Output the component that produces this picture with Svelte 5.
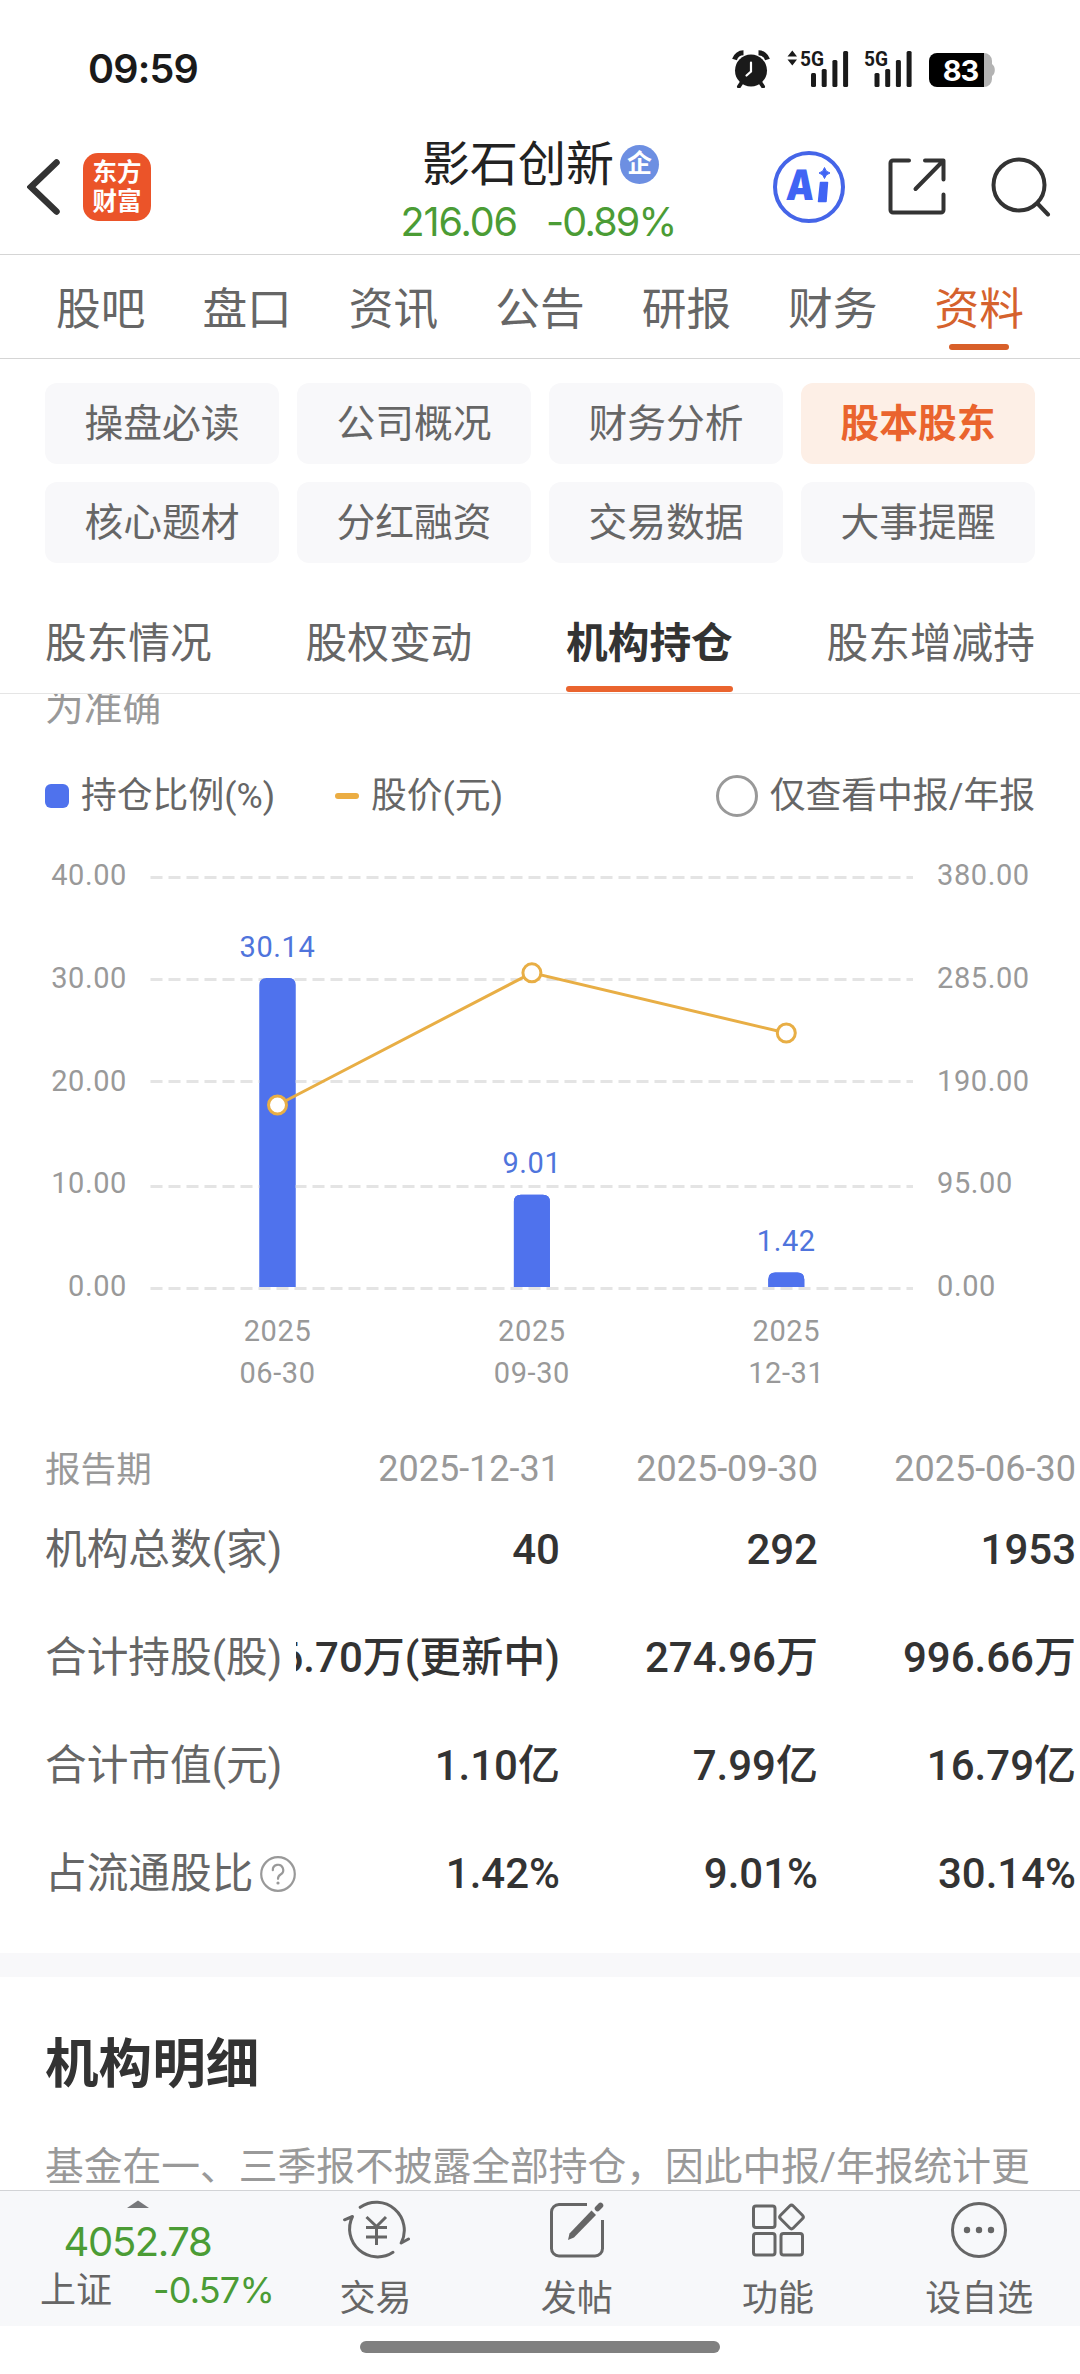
<script lang="ts">
	// 顶部一级标签
	const tabs = ['股吧', '盘口', '资讯', '公告', '研报', '财务', '资料'];
	let activeTab = '资料';

	// 资料下的栏目
	const chips = [
		'操盘必读',
		'公司概况',
		'财务分析',
		'股本股东',
		'核心题材',
		'分红融资',
		'交易数据',
		'大事提醒'
	];
	let activeChip = '股本股东';

	const subTabs = ['股东情况', '股权变动', '机构持仓', '股东增减持'];
	let activeSub = '机构持仓';

	// 仅查看中报/年报
	let onlyHalfYear = false;

	// 图表数据
	const points = [
		{ year: '2025', day: '06-30', ratio: 30.14, price: 168.7 },
		{ year: '2025', day: '09-30', ratio: 9.01, price: 291.2 },
		{ year: '2025', day: '12-31', ratio: 1.42, price: 235.4 }
	];
	const gridLines = [
		{ y: 22.5, left: '40.00', right: '380.00' },
		{ y: 124.5, left: '30.00', right: '285.00' },
		{ y: 226.5, left: '20.00', right: '190.00' },
		{ y: 331.5, left: '10.00', right: '95.00' },
		{ y: 433.5, left: '0.00', right: '0.00' }
	];
	const BASE_Y = 432;
	const PLOT_HEIGHT = 410;
	const BAR_WIDTH = 36;

	const xAt = (i: number) => 277.5 + i * 254.4;
	const ratioY = (v: number) => BASE_Y - (v / 40) * PLOT_HEIGHT;
	const priceY = (v: number) => BASE_Y - (v / 380) * PLOT_HEIGHT;
	const labelY = (i: number) => 30 + i * 102.8;

	// 只有上方两个角是圆角的柱子
	function barPath(i: number, v: number) {
		const x = xAt(i) - BAR_WIDTH / 2;
		const y = ratioY(v);
		const r = 7;
		return `M${x} ${BASE_Y}V${y + r}q0 ${-r} ${r} ${-r}h${BAR_WIDTH - 2 * r}q${r} 0 ${r} ${r}V${BASE_Y}z`;
	}

	const linePoints = points.map((p, i) => `${xAt(i)},${priceY(p.price)}`).join(' ');

	// 表格
	const periods = ['2025-12-31', '2025-09-30', '2025-06-30'];
	const rows = [
		{ label: '机构总数(家)', values: ['40', '292', '1953'] },
		{ label: '合计持股(股)', values: ['46.70万(更新中)', '274.96万', '996.66万'] },
		{ label: '合计市值(元)', values: ['1.10亿', '7.99亿', '16.79亿'] },
		{ label: '占流通股比', values: ['1.42%', '9.01%', '30.14%'], help: true }
	];
</script>

<div class="page">
	<div class="status-bar">
		<span class="time">09:59</span>
		<div class="status-icons">
			<svg class="alarm" width="38" height="38" viewBox="0 0 38 38">
				<path d="M2.500 9.500A9.500 9.500 0 0 1 11.500 2.800" fill="none" stroke="#1a1a1a" stroke-width="5" />
				<path d="M26.500 2.800a9.500 9.500 0 0 1 9 6.700" fill="none" stroke="#1a1a1a" stroke-width="5" />
				<circle cx="19" cy="20.500" r="16" fill="#1a1a1a" />
				<path d="M10 32l-3 4.500M28 32l3 4.500" stroke="#1a1a1a" stroke-width="4" stroke-linecap="round" />
				<path
					d="M19 12.500v9l-4.500 4"
					fill="none"
					stroke="#fff"
					stroke-width="2.200"
					stroke-linecap="round"
				/>
			</svg>
			<svg class="signal" width="62" height="38" viewBox="0 0 62 38">
				<path d="M0.500 6.500L5.300 0.500L10 6.500zM0.500 9.500h9.500l-4.700 6z" fill="#1a1a1a" />
				<text x="13" y="16" class="net" textLength="24" lengthAdjust="spacingAndGlyphs">5G</text>
				<rect x="24" y="23" width="5" height="14" rx="1.500" fill="#1a1a1a" />
				<rect x="34.700" y="19" width="5" height="18" rx="1.500" fill="#1a1a1a" />
				<rect x="45.400" y="10" width="5" height="27" rx="1.500" fill="#1a1a1a" />
				<rect x="56.100" y="1" width="5" height="36" rx="1.500" fill="#1a1a1a" />
			</svg>
			<svg class="signal" width="49" height="38" viewBox="0 0 49 38">
				<text x="0" y="16" class="net" textLength="24" lengthAdjust="spacingAndGlyphs">5G</text>
				<rect x="10.500" y="23" width="5" height="14" rx="1.500" fill="#1a1a1a" />
				<rect x="21.200" y="19" width="5" height="18" rx="1.500" fill="#1a1a1a" />
				<rect x="31.900" y="10" width="5" height="27" rx="1.500" fill="#1a1a1a" />
				<rect x="42.600" y="1" width="5" height="36" rx="1.500" fill="#1a1a1a" />
			</svg>
			<svg class="battery" width="66" height="34" viewBox="0 0 66 34">
				<path d="M54 0h1a8 8 0 0 1 8 8v3q2.800 2 2.800 6t-2.800 6v3a8 8 0 0 1-8 8h-1z" fill="#b3b3b3" />
				<path d="M8 0h47v34H8a8 8 0 0 1-8-8V8a8 8 0 0 1 8-8z" fill="#000" />
				<text x="31.500" y="28" class="level">83</text>
			</svg>
		</div>
	</div>

	<header class="top-bar">
		<div class="top-left">
			<svg width="34" height="60" viewBox="0 0 34 60">
				<path
					d="M29.500 5.500L4 30L29.500 54.500"
					fill="none"
					stroke="#333"
					stroke-width="6.500"
					stroke-linecap="round"
				/>
			</svg>
			<div class="app-logo"><span>东方</span><span>财富</span></div>
		</div>
		<div class="stock">
			<div class="stock-name">影石创新<span class="badge">企</span></div>
			<div class="stock-price"><span>216.06</span><span class="change">-0.89%</span></div>
		</div>
		<div class="top-right">
			<svg width="72" height="72" viewBox="0 0 72 72" aria-label="Ai">
				<circle cx="36" cy="36" r="34" fill="none" stroke="#4565e8" stroke-width="4" />
				<text
					x="12"
					y="49.500"
					class="ai"
					transform="skewX(-4) translate(4 0)"
					textLength="28"
					lengthAdjust="spacingAndGlyphs">A</text
				>
				<path
					d="M47.500 31.500h7l-1.500 19h-7.500z"
					fill="#4064f4"
					stroke="#4064f4"
					stroke-width="1.500"
					stroke-linejoin="round"
				/>
				<path
					d="M51.500 16.500q1 4.500 5.500 5.500q-4.500 1-5.500 5.500q-1-4.500-5.500-5.500q4.500-1 5.500-5.500z"
					fill="#4064f4"
					stroke="#4064f4"
				/>
			</svg>
			<svg width="58" height="58" viewBox="0 0 58 58">
				<g fill="none" stroke="#333" stroke-width="4" stroke-linecap="round" stroke-linejoin="round">
					<path
						d="M21 2.500H5a2.500 2.500 0 0 0-2.500 2.500V52a2.500 2.500 0 0 0 2.500 2.500H53a2.500 2.500 0 0 0 2.500-2.500V36.500"
					/>
					<path d="M37 2.500H55.500V21.500M54 4L27.500 31" />
				</g>
			</svg>
			<svg class="search" width="60" height="60" viewBox="0 0 60 60">
				<g fill="none" stroke="#333" stroke-width="4" stroke-linecap="round">
					<circle cx="28" cy="28" r="25.500" />
					<path d="M46.500 46.500L57 57.500" />
				</g>
			</svg>
		</div>
	</header>

	<nav class="tabs">
		{#each tabs as tab}
			<button class:active={tab === activeTab} on:click={() => (activeTab = tab)}>{tab}</button>
		{/each}
	</nav>

	<div class="chips">
		{#each chips as chip}
			<button class:active={chip === activeChip} on:click={() => (activeChip = chip)}>{chip}</button>
		{/each}
	</div>

	<nav class="sub-tabs">
		{#each subTabs as sub}
			<button class:active={sub === activeSub} on:click={() => (activeSub = sub)}>{sub}</button>
		{/each}
	</nav>

	<main class="content">
		<p class="notice">为准确</p>

		<div class="legend">
			<span class="mark bar-mark"></span>
			<span class="legend-ratio">持仓比例(%)</span>
			<span class="mark line-mark"></span>
			<span>股价(元)</span>
			<button class="filter" on:click={() => (onlyHalfYear = !onlyHalfYear)}>
				<span class="radio" class:checked={onlyHalfYear}></span>仅查看中报/年报
			</button>
		</div>

		<svg class="chart" width="1080" height="588" viewBox="0 0 1080 588">
			{#each points as p, i}
				<path d={barPath(i, p.ratio)} fill="#4f72ed" />
			{/each}
			{#each gridLines as line, i}
				<text x="127" y={labelY(i)} class="axis end">{line.left}</text>
				<text x="937" y={labelY(i)} class="axis">{line.right}</text>
				<line x1="150.500" x2="913" y1={line.y} y2={line.y} class="grid" />
			{/each}
			{#each points as p, i}
				<path d={barPath(i, p.ratio)} fill="#4f72ed" />
				<text x={xAt(i)} y={ratioY(p.ratio) - 21.5} class="axis mid value">{p.ratio}</text>
				<text x={xAt(i)} y="486" class="axis mid">{p.year}</text>
				<text x={xAt(i)} y="528" class="axis mid">{p.day}</text>
			{/each}
			<polyline points={linePoints} class="price-line" />
			{#each points as p, i}
				<circle cx={xAt(i)} cy={priceY(p.price)} r="9" class="dot" />
			{/each}
		</svg>

		<div class="table">
			<div class="labels">
				<div class="cell head">报告期</div>
				{#each rows as row}
					<div class="cell">
						{row.label}
						{#if row.help}
							<svg width="36" height="36" viewBox="0 0 36 36">
								<g fill="none" stroke="#999" stroke-width="2.200" stroke-linecap="round">
									<circle cx="18" cy="18" r="16.800" />
									<path d="M12.800 14.200a5.200 5.200 0 1 1 7.800 4.300q-2.600 1.600-2.600 4.300" />
								</g>
								<circle cx="18" cy="27" r="1.600" fill="#999" />
							</svg>
						{/if}
					</div>
				{/each}
			</div>
			<div class="scroller">
				{#each periods as period}
					<div class="cell head">{period}</div>
				{/each}
				{#each rows as row}
					{#each row.values as value}
						<div class="cell num">{value}</div>
					{/each}
				{/each}
			</div>
		</div>

		<section class="detail">
			<h2>机构明细</h2>
			<p>基金在一、三季报不披露全部持仓，因此中报/年报统计更</p>
		</section>
	</main>

	<footer class="bottom-bar">
		<div class="index">
			<svg width="22" height="8" viewBox="0 0 22 8"><path d="M0 8L11 0.500L22 8z" fill="#77787b" /></svg>
			<span class="index-value">4052.78</span>
			<div class="index-row"><span class="index-name">上证</span><span>-0.57%</span></div>
		</div>
		<div class="action">
			<svg width="68" height="60" viewBox="0 0 68 60">
				<g fill="none" stroke="#666" stroke-width="3" stroke-linecap="round" stroke-linejoin="round">
					<path d="M18.200 7.300A28 28 0 0 1 59.200 43L66.500 39" />
					<path d="M51 52.300A28 28 0 0 1 10.500 16.500L2.500 19.800" />
					<path d="M24.500 17L34.500 26.500L44 17M24 27.500H45M24 37H45M34.500 26.500V45" stroke-linecap="butt" />
				</g>
			</svg>
			<span>交易</span>
		</div>
		<div class="action">
			<svg width="56" height="60" viewBox="0 0 56 60">
				<path
					d="M38 4.500H10A7.500 7.500 0 0 0 2.500 12V48.500A7.500 7.500 0 0 0 10 56H46A7.500 7.500 0 0 0 53.500 48.500V20"
					fill="none"
					stroke="#666"
					stroke-width="3"
				/>
				<path d="M42.500 10.500L47 15L25 37.500L19 40L20.500 33.500z" fill="#666" />
				<path d="M48.500 8.500L51.500 5.500" stroke="#666" stroke-width="5.500" stroke-linecap="round" />
			</svg>
			<span>发帖</span>
		</div>
		<div class="action">
			<svg width="56" height="60" viewBox="0 0 56 60">
				<g fill="none" stroke="#666" stroke-width="3">
					<rect x="3.500" y="6" width="21.500" height="21.500" rx="2.500" />
					<rect x="3.500" y="33.500" width="21.500" height="21.500" rx="2.500" />
					<rect x="31" y="33.500" width="21.500" height="21.500" rx="2.500" />
					<rect x="32.500" y="8" width="18" height="18" rx="2.500" transform="rotate(45 41.500 17)" />
				</g>
			</svg>
			<span>功能</span>
		</div>
		<div class="action">
			<svg width="58" height="60" viewBox="0 0 58 60">
				<circle cx="29" cy="30" r="26.500" fill="none" stroke="#666" stroke-width="3" />
				<g fill="#666">
					<circle cx="17" cy="30" r="3.200" />
					<circle cx="29" cy="30" r="3.200" />
					<circle cx="41" cy="30" r="3.200" />
				</g>
			</svg>
			<span>设自选</span>
		</div>
	</footer>
	<div class="home-area"><div class="home-indicator"></div></div>
</div>

<style>
	.page {
		width: 1080px;
		height: 2374px;
		display: flex;
		flex-direction: column;
		overflow: hidden;
		background: #fff;
		color: #666;
		font-family: Roboto, 'Noto Sans CJK SC', sans-serif;
		line-height: 1.2;
	}

	button {
		padding: 0;
		border: none;
		background: none;
		color: inherit;
		font: inherit;
		cursor: pointer;
	}

	p,
	h2 {
		margin: 0;
	}

	svg {
		display: block;
		flex: none;
	}

	.status-bar {
		height: 120px;
		box-sizing: border-box;
		padding: 18px 85px 0 88px;
		display: flex;
		align-items: center;
		justify-content: space-between;
	}

	.time {
		color: #1a1a1a;
		font: 600 39.5px/50px Inter, sans-serif;
		letter-spacing: -0.8px;
	}

	.status-icons {
		display: flex;
		align-items: center;
	}

	.signal {
		margin-left: 17px;
		overflow: visible;
	}

	.signal + .signal {
		margin-left: 15px;
	}

	.battery {
		margin: 2px 0 0 16px;
	}

	.net {
		font: 700 21px Roboto, sans-serif;
		fill: #1a1a1a;
	}

	.level {
		font: 700 29px Inter, sans-serif;
		letter-spacing: -1px;
		fill: #fff;
		text-anchor: middle;
	}

	.top-bar {
		height: 134px;
		padding: 0 29px 0 27px;
		display: grid;
		grid-template-columns: 1fr auto 1fr;
		align-items: center;
		border-bottom: 1px solid #d5d5d5;
	}

	.top-left {
		display: flex;
		align-items: center;
		gap: 22px;
	}

	.app-logo {
		width: 68px;
		height: 68px;
		border-radius: 15px;
		background: #eb5429;
		color: #fff;
		display: flex;
		flex-direction: column;
		align-items: center;
		justify-content: center;
		font-size: 24.5px;
		font-weight: 700;
		line-height: 29px;
	}

	.stock {
		padding: 12px 0 0 3px;
		display: flex;
		flex-direction: column;
		align-items: center;
	}

	.stock-name {
		display: flex;
		align-items: center;
		gap: 6px;
		color: #222;
		font-size: 48px;
		line-height: 58px;
	}

	.badge {
		width: 39px;
		height: 39px;
		border-radius: 50%;
		background: #6d8fe2;
		color: #fff;
		font-size: 25px;
		font-weight: 700;
		line-height: 38px;
		text-align: center;
	}

	.stock-price {
		padding-right: 5px;
		display: flex;
		gap: 29px;
		color: #4b9c35;
		font: 400 39.5px/57px Inter, sans-serif;
		letter-spacing: -1.1px;
	}

	.change {
		letter-spacing: -1.8px;
	}

	.top-right {
		display: flex;
		align-items: center;
		justify-content: flex-end;
		gap: 43px;
	}

	.search {
		margin-left: 2px;
	}

	.ai {
		font: 900 42px Inter, sans-serif;
		fill: #4064f4;
	}

	.tabs {
		height: 103px;
		padding: 0 56px;
		display: flex;
		justify-content: space-between;
		border-bottom: 1px solid #d5d5d5;
		font-size: 44.7px;
	}

	.tabs button,
	.sub-tabs button {
		position: relative;
	}

	.tabs button {
		padding-top: 8px;
	}

	.tabs .active {
		color: #d5622d;
	}

	.tabs .active::after {
		content: '';
		position: absolute;
		left: calc(50% - 30px);
		bottom: 8px;
		width: 60px;
		height: 6px;
		border-radius: 3px;
		background: #d85f29;
	}

	.chips {
		padding: 24px 45px 0;
		display: grid;
		grid-template-columns: repeat(4, 1fr);
		gap: 18px;
	}

	.chips button {
		height: 81px;
		padding-top: 2px;
		border-radius: 12px;
		background: #f8f8fa;
		font-size: 38.75px;
	}

	.chips .active {
		background: #fdefe6;
		color: #ea642e;
		font-weight: 700;
	}

	.sub-tabs {
		height: 97px;
		padding: 33px 45px 0;
		display: flex;
		justify-content: space-between;
		border-bottom: 1px solid #e5e5e5;
		font-size: 41.7px;
	}

	.sub-tabs .active {
		color: #333;
		font-weight: 700;
	}

	.sub-tabs .active::after {
		content: '';
		position: absolute;
		left: 0;
		right: 0;
		bottom: 1px;
		height: 6px;
		border-radius: 3px;
		background: #ea642e;
	}

	.content {
		flex: 1;
		min-height: 0;
		overflow: hidden;
	}

	.notice {
		height: 43px;
		padding: 0 45px;
		display: flex;
		align-items: flex-end;
		overflow: hidden;
		color: #999;
		font-size: 38.75px;
		line-height: 58px;
	}

	.legend {
		height: 118px;
		padding: 0 45px;
		display: flex;
		align-items: center;
		gap: 12px;
		font-size: 35.8px;
	}

	.mark {
		width: 24px;
		height: 24px;
		border-radius: 6px;
		background: #4f72ed;
	}

	.legend-ratio {
		width: 242px;
	}

	.line-mark {
		height: 6px;
		border-radius: 3px;
		background: #ebad43;
	}

	.filter {
		margin-left: auto;
		display: flex;
		align-items: center;
		gap: 12px;
	}

	.radio {
		width: 42px;
		height: 42px;
		box-sizing: border-box;
		border: 3px solid #999;
		border-radius: 50%;
	}

	.radio.checked {
		border: 12px solid #ea642e;
	}

	.grid {
		stroke: #e4e4e4;
		stroke-width: 3;
		stroke-dasharray: 12 6;
	}

	.axis {
		font-size: 29px;
		letter-spacing: 0.6px;
		fill: #999;
	}

	.end {
		text-anchor: end;
	}

	.mid {
		text-anchor: middle;
	}

	.value {
		fill: #4f74dc;
	}

	.price-line {
		fill: none;
		stroke: #e8ae45;
		stroke-width: 3;
	}

	.dot {
		fill: #fff;
		stroke: #e8ae45;
		stroke-width: 3;
	}

	.table {
		display: flex;
		padding: 1px 0 25px;
		border-bottom: 24px solid #f8f8fa;
	}

	.labels {
		width: 296px;
		flex: none;
	}

	.scroller {
		flex: 1;
		overflow: hidden;
		display: grid;
		grid-template-columns: 264px 258px 258px;
	}

	.cell {
		height: 108px;
		display: flex;
		align-items: center;
		font-size: 42px;
		white-space: nowrap;
	}

	.labels .cell {
		padding-left: 45px;
		gap: 7px;
		font-size: 41.7px;
	}

	.scroller .cell {
		justify-content: flex-end;
	}

	.cell.head {
		height: 52px;
		color: #999;
		font-size: 36px;
	}

	.labels .head {
		font-size: 35.6px;
	}

	.num {
		color: #333;
		font-weight: 500;
	}

	.detail {
		padding: 48px 45px 0;
	}

	.detail h2 {
		color: #333;
		font-size: 53.6px;
		font-weight: 700;
		line-height: 80px;
	}

	.detail p {
		margin-top: 33px;
		color: #999;
		font-size: 38.75px;
		line-height: 58px;
		white-space: nowrap;
	}

	.bottom-bar {
		height: 135px;
		display: flex;
		border-top: 1px solid #d2d3d6;
		background: #f7f8fa;
	}

	.index {
		width: 275px;
		padding-top: 9px;
		display: flex;
		flex-direction: column;
		align-items: center;
		color: #4b9c35;
		font-family: Inter, 'Noto Sans CJK SC', sans-serif;
	}

	.index-value {
		margin-top: 9px;
		font-size: 40px;
		line-height: 50px;
		letter-spacing: -1.4px;
	}

	.index-row {
		width: 234px;
		margin-left: 40px;
		align-self: flex-start;
		display: flex;
		justify-content: space-between;
		font-size: 36px;
		line-height: 46px;
		letter-spacing: -0.8px;
	}

	.index-name {
		color: #666;
		letter-spacing: 0;
	}

	.action {
		flex: 1;
		padding-top: 9px;
		display: flex;
		flex-direction: column;
		align-items: center;
		gap: 13px;
		font-size: 36px;
		line-height: 52px;
	}

	.home-area {
		height: 48px;
		box-sizing: border-box;
		padding-top: 15px;
	}

	.home-indicator {
		width: 360px;
		height: 12px;
		margin: 0 auto;
		border-radius: 6px;
		background: #808080;
	}
</style>
